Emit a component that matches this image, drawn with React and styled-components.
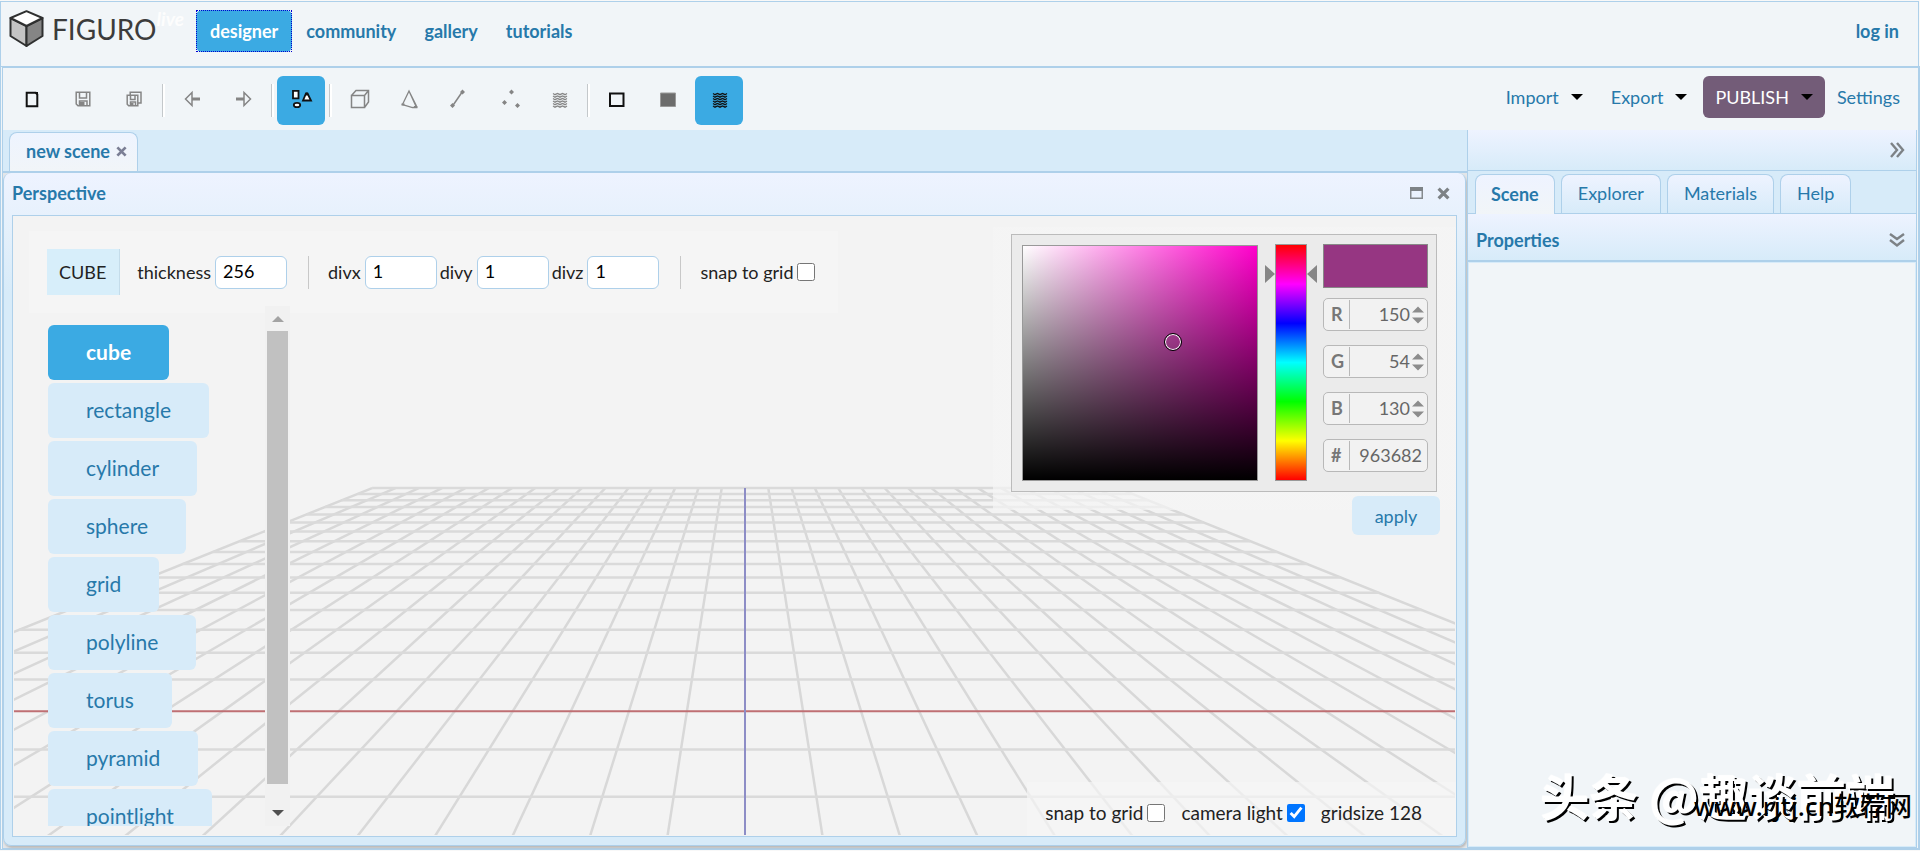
import React, { useState } from 'react';
import styled, { createGlobalStyle } from 'styled-components';

const GlobalStyle = createGlobalStyle`
  * {
    box-sizing: border-box;
  }

  body {
    margin: 0;
    background: #f8f8f8;
    font-family: Lato, sans-serif;
    font-size: 18px;
    color: #222;
  }

  button, input {
    font-family: inherit;
    font-size: inherit;
    color: inherit;
  }

  button {
    cursor: pointer;
  }
`;

const Page = styled.div`
  height: 100vh;
  min-height: 600px;
  padding-top: 1px;
  display: flex;
  flex-direction: column;
  overflow: hidden;
  position: relative;
`;

const Header = styled.header`
  flex: none;
  height: 65px;
  margin-right: 1px;
  padding: 8px 19px 0 8px;
  display: flex;
  align-items: flex-start;
  background: #f1f5f8;
  border: 1px solid #aed0ea;
  border-bottom: none;
`;

const Brand = styled.a`
  width: 187px;
  display: flex;
  align-items: flex-start;
  text-decoration: none;

  svg {
    flex: none;
    margin-right: 8px;
  }
`;

const BrandName = styled.span`
  font-size: 28px;
  line-height: 38px;
  color: #3c3c3c;
`;

const BrandTag = styled.span`
  font-size: 19px;
  line-height: 18px;
  font-style: italic;
  font-weight: bold;
  color: #fdfdfd;
`;

const Nav = styled.nav`
  flex: 1;
  display: flex;
`;

const NavLink = styled.a`
  padding: 0 14px;
  line-height: 42px;
  font-weight: bold;
  text-decoration: none;
  border-radius: 6px;
  color: ${props => props.$active ? 'white' : '#2779aa'};
  background: ${props => props.$active ? '#3baae3' : 'none'};
`;

const FocusRing = styled.span`
  display: flex;
  outline: 1px dotted #0000d0;
  outline-offset: -1px;
`;

const LoginLink = styled.a`
  line-height: 42px;
  font-weight: bold;
  text-decoration: none;
  color: #2779aa;
`;

const Shell = styled.div`
  flex: 1;
  min-height: 0;
  margin-bottom: 1px;
  display: flex;
  flex-direction: column;
  background: #f1f5f8;
  border: 2px solid #aed0ea;
  border-left: 3px double #aed0ea;
`;

const Toolbar = styled.div`
  flex: none;
  height: 62px;
  padding: 8px 2px 0 5px;
  display: flex;
  align-items: flex-start;
  justify-content: space-between;
`;

const Tools = styled.div`
  display: flex;
`;

const ToolGroup = styled.div`
  display: flex;
  gap: ${props => props.$tight ? '2px' : '3px'};
`;

const Separator = styled.div`
  width: 3px;
  height: 33px;
  margin: 8px 3px 0 4px;
  background: white;
  border-left: 1px solid #c4c8cb;
`;

const ToolButton = styled.button`
  width: 48px;
  height: 49px;
  padding: 0;
  border: none;
  border-radius: 6px;
  background: ${props => props.$active ? '#3baae3' : 'none'};
  color: ${props => props.$dark ? '#111' : '#858585'};

  svg {
    display: block;
    margin: 0 auto;
  }
`;

const Menus = styled.div`
  display: flex;
`;

const MenuButton = styled.button`
  height: 42px;
  margin-right: ${props => props.$primary ? '0' : '4px'};
  padding: 0 12px;
  display: flex;
  align-items: center;
  gap: 12px;
  border: none;
  border-radius: 6px;
  background: ${props => props.$primary ? '#735c78' : 'none'};
  color: ${props => props.$primary ? 'white' : '#2779aa'};
`;

const Caret = styled.span`
  border: 6px solid transparent;
  border-top-color: black;
  border-bottom: none;
`;

const Body = styled.div`
  flex: 1;
  min-height: 0;
  padding-right: 1px;
  display: grid;
  grid-template-columns: minmax(0, 1fr) 450px;
  grid-template-rows: minmax(0, 1fr);
`;

const Workspace = styled.main`
  display: flex;
  flex-direction: column;
  background: #e3e6e9;
`;

const SceneTabs = styled.div`
  flex: none;
  height: 43px;
  padding: 2px 6px 0;
  display: flex;
  background: #d7ebf9;
  border-bottom: 2px solid #aed0ea;
`;

const SceneTab = styled.div`
  height: 39px;
  padding: 0 10px 2px 16px;
  display: flex;
  align-items: center;
  gap: 6px;
  font-weight: bold;
  color: #2779aa;
  background: linear-gradient(#eef4ff, #f1f5f8);
  border: 1px solid #aed0ea;
  border-bottom: none;
  border-radius: 8px 8px 0 0;
`;

const IconButton = styled.button`
  padding: 0;
  display: flex;
  border: none;
  background: none;
`;

const Panel = styled.section`
  flex: 1;
  min-height: 0;
  margin: 0 1px 2px 0;
  padding: 0 8px 8px;
  display: flex;
  flex-direction: column;
  background: linear-gradient(#eef3ff, #e4f0fb 60px, #d7ebf9 120px);
  border: 1px solid #aed0ea;
  border-top: none;
  border-radius: 8px;
  box-shadow: 1px 2px 2px #bbb;
`;

const PanelTitle = styled.div`
  flex: none;
  height: 42px;
  padding: 0 7px 2px 0;
  display: flex;
  align-items: center;
  gap: 14px;
  font-weight: bold;
  color: #2779aa;

  span {
    flex: 1;
  }
`;

const Viewport = styled.div`
  flex: 1;
  min-height: 0;
  position: relative;
  overflow: hidden;
  background: #f3f3f3;
  border: 1px solid #aed0ea;
`;

const GridSvg = styled.svg`
  position: absolute;
  inset: 1px;
  width: calc(100% - 2px);
  height: calc(100% - 2px);
`;

const ShapeOptions = styled.form`
  position: absolute;
  top: 15px;
  left: 16px;
  height: 82px;
  padding: 0 20px 0 18px;
  display: flex;
  align-items: center;
  background: rgba(245, 245, 245, 0.8);
`;

const ShapeName = styled.div`
  height: 46px;
  margin-right: 17px;
  padding: 0 13px 0 12px;
  line-height: 46px;
  background: #d7eefa;
  border-right: 1px solid #c4dcea;
`;

const Field = styled.label`
  margin-right: 3px;
  display: flex;
  align-items: center;
  gap: 4px;
`;

const TextInput = styled.input`
  width: 72px;
  height: 33px;
  padding: 0 7px 2px;
  background: white;
  border: 1px solid #aed0ea;
  border-radius: 6px;
  color: black;
`;

const OptionDivider = styled.div`
  width: 1px;
  height: 33px;
  margin: 0 19px 0 18px;
  background: #c8c8c8;
`;

const Check = styled.input`
  width: 18px;
  height: 18px;
  margin: 0;
`;

const ShapeArea = styled.div`
  position: absolute;
  top: 90px;
  bottom: 10px;
  left: 35px;
  width: 242px;
  display: flex;
  overflow: hidden;
`;

const ShapeList = styled.div`
  flex: 1;
  padding-top: 19px;
  display: flex;
  flex-direction: column;
  align-items: flex-start;
  gap: 3px;
`;

const ShapeButton = styled.button`
  flex: none;
  height: 55px;
  padding: 0 38px 2px;
  font-size: 21px;
  font-weight: ${props => props.$active ? 'bold' : 'normal'};
  border: none;
  border-radius: 6px;
  background: ${props => props.$active ? '#3baae3' : '#d7ebf9'};
  color: ${props => props.$active ? 'white' : '#2779aa'};
`;

const Scrollbar = styled.div`
  width: 25px;
  padding: 0 2px;
  display: flex;
  flex-direction: column;
  align-items: center;
  background: #f1f1f1;
`;

const ScrollArrow = styled.span`
  margin: ${props => props.$up ? '10px 0 9px' : '26px 0 10px'};
  border: 6px solid transparent;
  ${props => props.$up
    ? 'border-bottom-color: #a3a3a3; border-top: none;'
    : 'border-top-color: #505050; border-bottom: none;'}
`;

const ScrollThumb = styled.div`
  flex: 1;
  width: 21px;
  background: #c1c1c1;
`;

const PickerArea = styled.div`
  position: absolute;
  top: 11px;
  right: 0;
  width: 463px;
  padding: 7px 19px 0 0;
  display: flex;
  flex-direction: column;
  align-items: flex-end;
  background: linear-gradient(rgba(245, 245, 245, 0.7), rgba(245, 245, 245, 0.7)) no-repeat 0 0 / 100% 283px;
`;

const Picker = styled.div`
  width: 426px;
  height: 258px;
  padding: 9px 8px 9px 10px;
  display: flex;
  background: #ebebeb;
  border: 1px solid #bbb;
`;

const ColorField = styled.div`
  width: 236px;
  height: 236px;
  margin-top: 1px;
  position: relative;
  border: 1px solid #999;
  background:
    linear-gradient(transparent, black),
    linear-gradient(to right, white, #ff00cb);
`;

const ColorMarker = styled.span`
  position: absolute;
  left: 64%;
  top: 41%;
  width: 18px;
  height: 18px;
  margin: -9px 0 0 -9px;
  border: 1px solid black;
  border-radius: 50%;
  box-shadow: inset 0 0 0 1px white;
`;

const HueField = styled.div`
  width: 32px;
  height: 237px;
  margin: 0 16px 0 17px;
  position: relative;
  border: 1px solid #999;
  background: linear-gradient(#f00, #f0f, #00f, #0ff, #0f0, #ff0, #f00);
`;

const HueArrow = styled.span`
  position: absolute;
  top: 20px;
  border: 9px solid transparent;
  ${props => props.$left
    ? 'right: 31px; border-left: 10px solid #868686; border-right: none;'
    : 'left: 31px; border-right: 10px solid #868686; border-left: none;'}
`;

const PickerValues = styled.div`
  width: 105px;
`;

const Swatch = styled.div`
  height: 44px;
  margin-bottom: 10px;
  background: #963682;
  border: 1px solid #888;
`;

const ValueBox = styled.label`
  height: 33px;
  margin-bottom: 14px;
  padding-right: 3px;
  display: flex;
  align-items: center;
  background: #f2f2f2;
  border: 1px solid #b8b8b8;
  border-radius: 5px;
`;

const ValueName = styled.span`
  width: 26px;
  padding-left: 7px;
  line-height: 29px;
  font-weight: bold;
  color: #777;
  border-right: 1px solid #b8b8b8;
`;

const ValueInput = styled.input`
  flex: 1;
  min-width: 0;
  padding: 0 2px 2px 0;
  text-align: right;
  color: #666;
  border: none;
  background: none;
`;

const ApplyButton = styled.button`
  width: 88px;
  height: 39px;
  margin: 4px -3px 0 0;
  border: none;
  border-radius: 6px;
  background: #d7ebf9;
  color: #2779aa;
`;

const StatusBar = styled.div`
  position: absolute;
  right: 0;
  bottom: 0;
  height: 54px;
  padding: 7px 34px 0 18px;
  display: flex;
  align-items: center;
  gap: 16px;
  font-size: 19px;
  line-height: 24px;
  background: rgba(245, 245, 245, 0.7);
`;

const StatusLabel = styled.label`
  display: flex;
  align-items: center;
  gap: 4px;
`;

const Sidebar = styled.aside`
  display: flex;
  flex-direction: column;
  border: 1px solid #aed0ea;
  border-top: none;
`;

const SidebarHeader = styled.div`
  flex: none;
  height: 41px;
  padding-right: 11px;
  display: flex;
  align-items: center;
  justify-content: flex-end;
  background: linear-gradient(#eef3ff, #d7ebf9);
  border-bottom: 1px solid #aed0ea;
`;

const SidebarTabs = styled.div`
  flex: none;
  height: 43px;
  padding: 3px 7px 0;
  display: flex;
  gap: 6px;
  background: #d7ebf9;
  border-bottom: 1px solid #aed0ea;
`;

const SidebarTab = styled.button`
  height: ${props => props.$active ? '40px' : '39px'};
  padding: ${props => props.$active ? '0 15px 2px' : '0 16px 2px'};
  font-weight: ${props => props.$active ? 'bold' : 'normal'};
  color: #2779aa;
  background: ${props => props.$active
    ? 'linear-gradient(#eef3ff, #f1f5f8)'
    : 'linear-gradient(#eef3ff, #d7ebf9)'};
  border: 1px solid #aed0ea;
  border-bottom: none;
  border-radius: 8px 8px 0 0;
`;

const SectionTitle = styled.div`
  flex: none;
  height: 48px;
  padding: 5px 11px 0 8px;
  display: flex;
  align-items: center;
  justify-content: space-between;
  font-weight: bold;
  color: #2779aa;
  background: linear-gradient(#eef3ff, #d7ebf9);
  border-bottom: 2px solid #aed0ea;
`;

const SectionBody = styled.div`
  flex: 1;
  background: #f1f5f8;
  border: 1px solid #d7ebf9;
`;

const Watermark = styled.div`
  position: absolute;
  right: 25px;
  bottom: 21px;
  font-family: "Noto Sans CJK SC", sans-serif;
  font-size: 49px;
  line-height: 70px;
  font-weight: bold;
  white-space: nowrap;
  color: white;
  text-shadow: 2px 2px 0 black, -1px -1px 1px white;
`;

const SiteMark = styled.div`
  position: absolute;
  right: 8px;
  bottom: 27px;
  font-family: "Noto Sans", "Noto Sans CJK SC", sans-serif;
  font-size: 26px;
  line-height: 36px;
  font-weight: 500;
  white-space: nowrap;
  color: black;
`;

const wave = [0, 1, 2, 3, 4, 5]
  .map(i => `M18 ${17.5 + i * 2.5}l2 1.2l2.500 -1.200l2.500 1.200l2.500 -1.200l2.500 1.200l2 -1.200`)
  .join('');

const Icon = ({ children }) => (
  <svg width="48" height="49" viewBox="0 0 48 49" fill="none" stroke="currentColor" strokeWidth="1.5" aria-hidden="true">
    {children}
  </svg>
);

const NewIcon = () => (
  <Icon>
    <path d="M18.700 16.700h9l1.600 1.600v12h-10.600z" strokeWidth="2" />
    <path d="M26 16h4v4z" fill="currentColor" stroke="none" />
  </Icon>
);

const SaveIcon = () => (
  <Icon>
    <path d="M17.200 16.200h13.600v13.600h-11.800l-1.800-1.800zM20.500 16.500v5.500h7v-5.500M20.500 30v-5h7.500v5" />
    <path d="M20.500 26h5v4h-5z" fill="currentColor" stroke="none" />
  </Icon>
);

const SaveAllIcon = () => (
  <Icon>
    <path d="M17.200 19.200h10.600v10.600h-9.100l-1.500-1.500zM20.200 19.200v-3h10.800v10.800h-3M20.500 19.500v4h4.500v-4M20.500 30v-4h5v4" />
    <path d="M20.500 27h3v3h-3z" fill="currentColor" stroke="none" />
  </Icon>
);

const UndoIcon = () => (
  <Icon>
    <path d="M24 16.500v13l-6.500-6.500z" />
    <path d="M24 23h8" strokeWidth="3" />
  </Icon>
);

const RedoIcon = () => (
  <Icon>
    <path d="M25 16.500l6.500 6.500l-6.500 6.500z" />
    <path d="M17 23h8" strokeWidth="3" />
  </Icon>
);

const ShapesIcon = () => (
  <Icon>
    <path d="M16 14.800h5.500v7.500h-5.500zM29 17.500h1.500l3.500 7h-8z" fill="white" strokeWidth="1.800" />
    <ellipse cx="20" cy="29" rx="3.200" ry="2.200" fill="white" strokeWidth="1.800" />
    <circle cx="29.800" cy="18" r="1.500" fill="currentColor" stroke="none" />
  </Icon>
);

const CubeIcon = () => (
  <Icon>
    <path d="M16.500 19.500h13v12h-13zM16.500 19.500l4.500-5h12.500v11.500l-4 5.500M29.500 19.500l4-5" />
  </Icon>
);

const ConeIcon = () => (
  <Icon>
    <path d="M24 15l-6.500 13.500l10 3h4zM24 15l7.500 15" strokeWidth="1.300" />
    <path d="M16.500 27.500h3v2h-3zM29 30h3.500v2h-3.500z" fill="currentColor" stroke="none" />
  </Icon>
);

const LineIcon = () => (
  <Icon>
    <path d="M17.500 30l10-14.500" />
    <path d="M27.500 13.500l2.500 2.500l-2.500 2.500l-2.500-2.500zM17.500 27l2.500 2.500l-2.500 2.500l-2.500-2.500z" fill="currentColor" stroke="none" />
  </Icon>
);

const PointsIcon = () => (
  <Icon>
    <path d="M26.500 13.500l2.500 2.500l-2.500 2.500l-2.500-2.500zM19.500 24l2.500 2.500l-2.500 2.500l-2.500-2.500zM32.500 27l2.500 2.500l-2.500 2.500l-2.500-2.500z" fill="currentColor" stroke="none" />
  </Icon>
);

const WaveIcon = () => (
  <Icon>
    <path d={wave} strokeWidth="1.300" />
  </Icon>
);

const SquareIcon = () => (
  <Icon>
    <path d="M17 17.500h13.500v12.500h-13.500z" strokeWidth="2" />
  </Icon>
);

const FilledIcon = () => (
  <Icon>
    <path d="M16.500 17h15v13.500h-15z" fill="#6c6c6c" stroke="#999" strokeWidth="1" />
  </Icon>
);

const CrossIcon = ({ size, color }) => (
  <svg width={size} height={size} viewBox="0 0 12 12" aria-hidden="true">
    <path d="M1.500 1.500l9 9M10.500 1.500l-9 9" stroke={color} strokeWidth="3" />
  </svg>
);

const WindowIcon = () => (
  <svg width="13" height="12" viewBox="0 0 13 12" aria-hidden="true">
    <path d="M0.750 0.750h11.500v10.500h-11.500z" fill="none" stroke="#858a8e" strokeWidth="1.500" />
    <path d="M0 0h13v4h-13z" fill="#7d8286" />
  </svg>
);

const ChevronsIcon = ({ down }) => (
  <svg width="16" height="16" viewBox="0 0 16 16" fill="none" stroke="#7d8286" strokeWidth="2.4" aria-hidden="true">
    {down
      ? <path d="M1 2l7 5l7-5M1 8l7 5.500l7-5.500" />
      : <path d="M2 1l6 7l-6 7M8 1l6 7l-6 7" />}
  </svg>
);

const Logo = () => (
  <svg width="35" height="38" viewBox="0 0 35 38" stroke="#2f3030" strokeWidth="2" strokeLinejoin="round" aria-hidden="true">
    <path d="M1.500 8l16 8v20l-16-10z" fill="#c4c4c4" />
    <path d="M33.500 8l-16 8v20l16-10z" fill="#858585" />
    <path d="M17.500 1.200l16 6.800l-16 8l-16-8z" fill="white" />
  </svg>
);

// floor grid: 16 cells each way from the origin, projected to the viewport
const HORIZON = 121.5;
const CENTER = 731;
const DEPTH = 10.73;
const project = (x, z) => [
  CENTER + (x * 623) / (DEPTH - z),
  HORIZON + 4000 / (DEPTH - z)
];

const linePath = (x1, z1, x2, z2) => {
  const [ax, ay] = project(x1, z1);
  const [bx, by] = project(x2, z2);
  return `M${ax.toFixed(1)} ${ay.toFixed(1)}L${bx.toFixed(1)} ${by.toFixed(1)}`;
};

const range = (from, to) => Array.from({ length: to - from + 1 }, (_, i) => from + i);

const rows = range(-16, 3).filter(z => z !== 0).map(z => linePath(-16, z, 16, z)).join('');
const columns = range(-16, 16).filter(x => x !== 0).map(x => linePath(x, -16, x, 4)).join('');

const FloorGrid = () => (
  <GridSvg viewBox="0 0 1441 618" preserveAspectRatio="xMidYMax slice" fill="none" aria-hidden="true">
    <path d={columns} stroke="#d8d8d8" strokeWidth="2.5" />
    <path d={rows} stroke="#dadada" strokeWidth="2.5" />
    <path d={linePath(-16, 0, 16, 0)} stroke="#bf6f73" strokeWidth="2" />
    <path d={linePath(0, -16, 0, 4)} stroke="#8d8dc6" strokeWidth="2" />
  </GridSvg>
);

const navItems = ['community', 'gallery', 'tutorials'];
const shapes = ['cube', 'rectangle', 'cylinder', 'sphere', 'grid', 'polyline', 'torus', 'pyramid', 'pointlight'];
const sidebarTabs = ['Scene', 'Explorer', 'Materials', 'Help'];
const channels = [['R', '150'], ['G', '54'], ['B', '130']];

const App = () => {
  const [shape, setShape] = useState('cube');
  const [tab, setTab] = useState('Scene');

  return (
    <Page>
      <GlobalStyle />
      <Header>
        <Brand href="#">
          <Logo />
          <BrandName>FIGURO</BrandName>
          <BrandTag>live</BrandTag>
        </Brand>
        <Nav>
          <FocusRing>
            <NavLink href="#designer" $active>designer</NavLink>
          </FocusRing>
          {navItems.map(item => (
            <NavLink key={item} href={`#${item}`}>{item}</NavLink>
          ))}
        </Nav>
        <LoginLink href="#login">log in</LoginLink>
      </Header>

      <Shell>
        <Toolbar>
          <Tools>
            <ToolGroup>
              <ToolButton $dark aria-label="new"><NewIcon /></ToolButton>
              <ToolButton aria-label="save"><SaveIcon /></ToolButton>
              <ToolButton aria-label="save all"><SaveAllIcon /></ToolButton>
            </ToolGroup>
            <Separator />
            <ToolGroup>
              <ToolButton aria-label="undo"><UndoIcon /></ToolButton>
              <ToolButton aria-label="redo"><RedoIcon /></ToolButton>
            </ToolGroup>
            <Separator />
            <ToolButton $active $dark aria-label="shapes"><ShapesIcon /></ToolButton>
            <Separator />
            <ToolGroup $tight>
              <ToolButton aria-label="objects"><CubeIcon /></ToolButton>
              <ToolButton aria-label="faces"><ConeIcon /></ToolButton>
              <ToolButton aria-label="edges"><LineIcon /></ToolButton>
              <ToolButton aria-label="points"><PointsIcon /></ToolButton>
              <ToolButton aria-label="texture"><WaveIcon /></ToolButton>
            </ToolGroup>
            <Separator />
            <ToolGroup>
              <ToolButton $dark aria-label="wireframe"><SquareIcon /></ToolButton>
              <ToolButton aria-label="solid"><FilledIcon /></ToolButton>
              <ToolButton $active $dark aria-label="textured"><WaveIcon /></ToolButton>
            </ToolGroup>
          </Tools>
          <Menus>
            <MenuButton>Import<Caret /></MenuButton>
            <MenuButton>Export<Caret /></MenuButton>
            <MenuButton $primary>PUBLISH<Caret /></MenuButton>
            <MenuButton>Settings</MenuButton>
          </Menus>
        </Toolbar>

        <Body>
          <Workspace>
            <SceneTabs>
              <SceneTab>
                new scene
                <IconButton aria-label="close scene"><CrossIcon size={11} color="#7b7f95" /></IconButton>
              </SceneTab>
            </SceneTabs>
            <Panel>
              <PanelTitle>
                <span>Perspective</span>
                <IconButton aria-label="maximize"><WindowIcon /></IconButton>
                <IconButton aria-label="close"><CrossIcon size={13} color="#7d8286" /></IconButton>
              </PanelTitle>
              <Viewport>
                <FloorGrid />
                <ShapeOptions>
                  <ShapeName>CUBE</ShapeName>
                  <Field>thickness<TextInput defaultValue="256" /></Field>
                  <OptionDivider />
                  <Field>divx<TextInput defaultValue="1" /></Field>
                  <Field>divy<TextInput defaultValue="1" /></Field>
                  <Field>divz<TextInput defaultValue="1" /></Field>
                  <OptionDivider />
                  <Field>snap to grid<Check type="checkbox" /></Field>
                </ShapeOptions>

                <ShapeArea>
                  <ShapeList>
                    {shapes.map(name => (
                      <ShapeButton key={name} $active={name === shape} onClick={() => setShape(name)}>
                        {name}
                      </ShapeButton>
                    ))}
                  </ShapeList>
                  <Scrollbar>
                    <ScrollArrow $up />
                    <ScrollThumb />
                    <ScrollArrow />
                  </Scrollbar>
                </ShapeArea>

                <PickerArea>
                  <Picker>
                    <ColorField><ColorMarker /></ColorField>
                    <HueField>
                      <HueArrow $left />
                      <HueArrow />
                    </HueField>
                    <PickerValues>
                      <Swatch />
                      {channels.map(([name, value]) => (
                        <ValueBox key={name}>
                          <ValueName>{name}</ValueName>
                          <ValueInput defaultValue={value} />
                          <svg width="12" height="18" viewBox="0 0 12 18" fill="#8c8c8c" aria-hidden="true">
                            <path d="M0 6.500l6-6l6 6zM0 11.500l6 6l6-6z" />
                          </svg>
                        </ValueBox>
                      ))}
                      <ValueBox>
                        <ValueName>#</ValueName>
                        <ValueInput defaultValue="963682" />
                      </ValueBox>
                    </PickerValues>
                  </Picker>
                  <ApplyButton>apply</ApplyButton>
                </PickerArea>

                <StatusBar>
                  <StatusLabel>snap to grid<Check type="checkbox" /></StatusLabel>
                  <StatusLabel>camera light<Check type="checkbox" defaultChecked /></StatusLabel>
                  <span>gridsize 128</span>
                </StatusBar>
              </Viewport>
            </Panel>
          </Workspace>

          <Sidebar>
            <SidebarHeader>
              <IconButton aria-label="collapse sidebar"><ChevronsIcon /></IconButton>
            </SidebarHeader>
            <SidebarTabs>
              {sidebarTabs.map(name => (
                <SidebarTab key={name} $active={name === tab} onClick={() => setTab(name)}>
                  {name}
                </SidebarTab>
              ))}
            </SidebarTabs>
            <SectionTitle>
              Properties
              <IconButton aria-label="collapse section"><ChevronsIcon down /></IconButton>
            </SectionTitle>
            <SectionBody />
          </Sidebar>
        </Body>
      </Shell>

      <Watermark>头条 @趣谈前端</Watermark>
      <SiteMark>www.rjtj.cn软荐网</SiteMark>
    </Page>
  );
};

export default App;
